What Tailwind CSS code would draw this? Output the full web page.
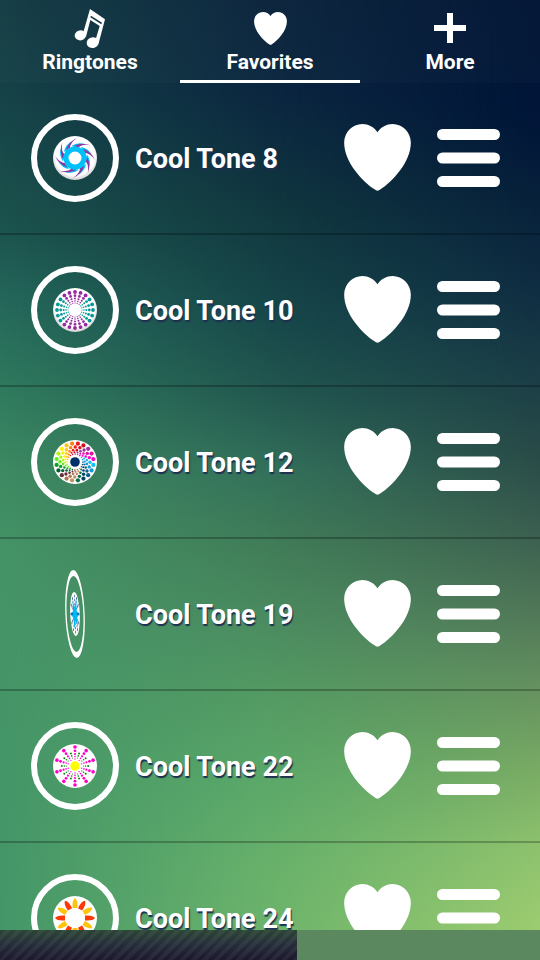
<!DOCTYPE html>
<html lang="en">
<head>
    <meta charset="UTF-8">
    <meta name="viewport" content="width=device-width, initial-scale=1.0">
    <title>Cool Tones - Favorites</title>
    <script src="https://cdn.jsdelivr.net/npm/@tailwindcss/browser@4"></script>
</head>
<body class="font-[Roboto,sans-serif] font-bold text-white">
    <!-- Shared shapes -->
    <svg class="absolute size-0">
        <defs>
            <radialGradient id="discFill" cx="50%" cy="45%" r="56%">
                <stop offset="0.8" stop-color="#fff"/>
                <stop offset="1" stop-color="#c9c9c9"/>
            </radialGradient>
            <symbol id="heart" viewBox="0 0 200 201">
                <path fill="#fff" d="M100 25C90 9 72 0 55 0 24 0 0 25 0 56c0 58 55 116 91 140q9 8 18 0c36-24 91-82 91-140 0-31-24-56-55-56-17 0-35 9-45 25z"/>
            </symbol>
            <symbol id="bars" viewBox="0 0 63 58">
                <path stroke="#fff" stroke-width="11" stroke-linecap="round" d="M5.5 5.5h52M5.5 29h52M5.5 52.5h52"/>
            </symbol>
        </defs>
    </svg>

    <div class="relative isolate flex h-screen flex-col overflow-hidden">
        <!-- Background: left, middle and right gradients faded into each other -->
        <div class="absolute inset-0 -z-10 bg-[linear-gradient(#133c44_0%,#154247_9%,#1c544e_24%,#24675a_31%,#307b5e_41%,#3d8a62_49%,#449366_57%,#459568_65%,#449668_100%)]"></div>
        <div class="absolute inset-0 -z-10 bg-[linear-gradient(#0a233c_0%,#0b2640_10%,#11383f_22%,#17484a_33%,#22574f_41%,#33705a_49%,#417d58_57%,#4b8c60_65%,#549b63_73%,#5ba869_81%,#68b16b_90%,#6fb56c_100%)] mask-[linear-gradient(to_right,transparent,#000_50%)]"></div>
        <div class="absolute inset-0 -z-10 bg-[linear-gradient(#001434_0%,#001538_12%,#061f3a_20%,#0e2b41_29%,#1a3d46_39%,#2a4c48_48%,#3c6050_56%,#517858_64%,#66925f_72%,#78aa64_80%,#8dc16d_88%,#9ccb70_96%)] mask-[linear-gradient(to_right,transparent_50%,#000)]"></div>

        <nav class="grid h-[83px] shrink-0 grid-cols-3 bg-white/2 text-[21px] leading-6">
            <a href="#" class="flex flex-col items-center border-b-3 border-transparent pt-2">
                <svg class="h-[42px] w-8" viewBox="219 24 96 126" fill="#fff">
                    <ellipse cx="238" cy="106" rx="17" ry="15" transform="rotate(-12 238 106)"/>
                    <ellipse cx="275" cy="128" rx="18" ry="16" transform="rotate(-12 275 128)"/>
                    <path fill-rule="evenodd" d="M267 27l45 31-19 72-12-2 15-50-28-18-13 50-11-3zM270 47l-2 5 33 21 2-5z"/>
                </svg>
                <span>Ringtones</span>
            </a>
            <a href="#" aria-current="page" class="flex flex-col items-center border-b-3 border-white pt-2">
                <span class="flex h-[42px] items-start pt-1"><svg class="size-[33px]"><use href="#heart"/></svg></span>
                <span>Favorites</span>
            </a>
            <a href="#" class="flex flex-col items-center border-b-3 border-transparent pt-2">
                <span class="flex h-[42px] items-start pt-1">
                    <svg class="size-8" viewBox="0 0 32 32" stroke="#fff" stroke-width="6"><path d="M0 16h32M16 1v30"/></svg>
                </span>
                <span>More</span>
            </a>
        </nav>

        <main class="min-h-0 flex-1 overflow-y-auto [scrollbar-width:none]">
            <ul id="toneList"></ul>
        </main>

        <!-- Banner strip -->
        <footer class="flex h-[30px] shrink-0 bg-[#5c885f]">
            <div class="w-[55%] bg-[repeating-linear-gradient(135deg,#0000_0_4px,#ffffff0d_4px_8px),linear-gradient(#2c4636,#252c3a_50%,#1c182c)]"></div>
        </footer>
    </div>

    <template id="toneRow">
        <li class="flex h-[152px] items-center border-b-2 border-black/25 pr-10 pl-[31px]">
            <svg class="disc size-[88px] shrink-0" viewBox="-44 -44 88 88"></svg>
            <span class="name flex-1 pt-0.5 pl-4 text-[27px] leading-8 text-shadow-[1px_2px_1px_#1f2f50]"></span>
            <button type="button" aria-label="Favorite" class="mr-[26px] pb-px"><svg class="size-[67px]"><use href="#heart"/></svg></button>
            <button type="button" aria-label="Options"><svg class="h-[58px] w-[63px]"><use href="#bars"/></svg></button>
        </li>
    </template>

    <script>
        const dot = (angle, r, size, color) => {
            const a = angle * Math.PI / 180;
            return `<circle cx="${(r * Math.sin(a)).toFixed(2)}" cy="${(-r * Math.cos(a)).toFixed(2)}" r="${size}" fill="${color}"/>`;
        };

        const rainbow = ['#f01818', '#d01020', '#a0309a', '#e010a8', '#ff00c8', '#18c0f0', '#1898d0', '#086090', '#084070', '#087048',
            '#c89060', '#b07850', '#683038', '#086030', '#10a020', '#60f010', '#b0f810', '#fff000', '#ffc010', '#ff8010'];

        function swirl() {
            let s = '';
            for (let a = 0; a < 360; a += 45) {
                s += `<g transform="rotate(${a})"><path fill="#00c0fa" d="M-11-6Q-10-13-3-17-8-12-7-8z"/><path fill="#8a3aa0" d="M-9-8Q-7-16 2-20-5-15-5-10z"/></g>`;
            }
            return s + '<circle r="9" fill="#fff" stroke="#00c0fa" stroke-width="5"/>';
        }

        function burst() {
            let s = '';
            for (let i = 0; i < 20; i++) {
                const color = [0, 1, 2, 8, 9, 10, 11, 12, 18, 19].includes(i) ? '#9428a0' : '#089898';
                [[18, 1.9], [14.3, 1.4], [11.4, 1], [9, .8], [7, .6]].forEach(([r, size]) => s += dot(i * 18, r, size, color));
            }
            return s;
        }

        function spectrum() {
            let s = '';
            rainbow.forEach((color, i) => {
                [[18.6, 2.1, 0], [15, 1.7, -8], [12, 1.3, -18], [9.8, 1, -30], [8, .8, -44]].forEach(([r, size, turn]) => s += dot(9 + i * 18 + turn, r, size, color));
            });
            return s + '<circle r="4.8" fill="#003068"/>';
        }

        function splash() {
            let s = '';
            for (let i = 0; i < 12; i++) {
                [[18, 1.6], [14, 1.4], [10, 1.2]].forEach(([r, size]) => s += dot(i * 30, r, size, '#0c2c68'));
            }
            return s + '<path fill="#00b8f4" d="M-9-13L0-7 9-16 8-3 19 0 8 4 12 13 2 7-6 15-8 4-20 0-8-3z"/><path stroke="#0860a0" stroke-width="1.5" d="M-18 0h10M8 0h10"/>';
        }

        function firework() {
            let s = '';
            for (let i = 0; i < 10; i++) {
                [[19, 1.8], [15.2, 1.4], [12, 1.1], [9.4, .8], [7, .7]].forEach(([r, size]) => s += dot(i * 36, r, size, '#ff00c8'));
                [[13.2, 1], [10.6, .8], [8.4, .6]].forEach(([r, size]) => s += dot(i * 36 + 18, r, size, '#108818'));
            }
            return s + '<circle r="4.7" fill="#ff0"/>';
        }

        function petals() {
            let s = '';
            for (let i = 0; i < 12; i++) {
                s += `<path transform="rotate(${i * 30})" fill="${i % 2 ? '#ff3808' : '#ffc40c'}" d="M0-20Q3-18 2.4-10h-4.8Q-3-18 0-20z"/>`;
            }
            return s;
        }

        const tones = [
            { name: 'Cool Tone 8', art: swirl, fill: 'url(#discFill)' },
            { name: 'Cool Tone 10', art: burst, fill: 'url(#discFill)' },
            { name: 'Cool Tone 12', art: spectrum, fill: '#fff' },
            { name: 'Cool Tone 19', art: splash, fill: '#fff', turn: 'matrix(.22 0 .04 1 0 0)' }, // mid-flip
            { name: 'Cool Tone 22', art: firework, fill: '#fff' },
            { name: 'Cool Tone 24', art: petals, fill: '#fff' }
        ];

        const list = document.getElementById('toneList');
        const template = document.getElementById('toneRow');

        tones.forEach(tone => {
            const row = template.content.cloneNode(true);
            row.querySelector('.name').textContent = tone.name;
            row.querySelector('.disc').innerHTML = `
                <g transform="${tone.turn || 'scale(1)'}">
                    <circle r="41" fill="none" stroke="#fff" stroke-width="6"/>
                    <circle r="22" fill="${tone.fill}"/>
                    ${tone.art()}
                </g>`;
            list.appendChild(row);
        });
    </script>
</body>
</html>
